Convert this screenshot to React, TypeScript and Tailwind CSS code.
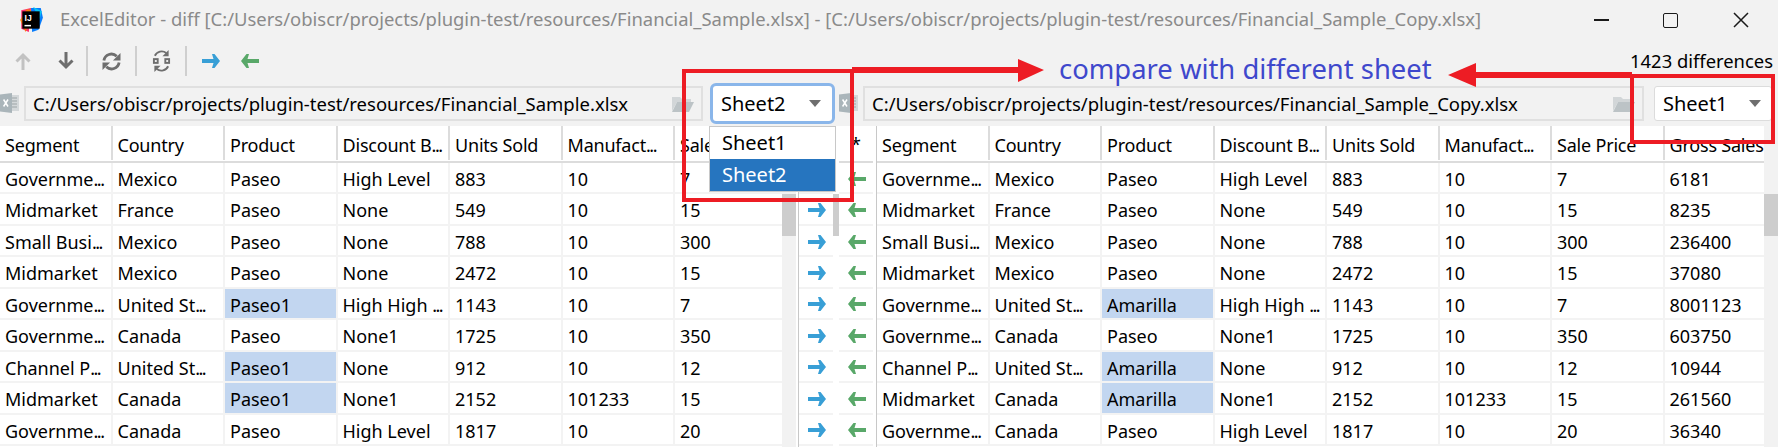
const font = { fontFamily: '"Noto Sans", "Open Sans", sans-serif' };

const headers = ["Segment", "Country", "Product", "Discount B...", "Units Sold", "Manufact...", "Sale Price", "Gross Sales"];

const rows = [
  ["Governme...", "Mexico", "Paseo", "High Level", "883", "10", "7", "6181"],
  ["Midmarket", "France", "Paseo", "None", "549", "10", "15", "8235"],
  ["Small Busi...", "Mexico", "Paseo", "None", "788", "10", "300", "236400"],
  ["Midmarket", "Mexico", "Paseo", "None", "2472", "10", "15", "37080"],
  ["Governme...", "United St...", "Paseo1", "High High ...", "1143", "10", "7", "8001123"],
  ["Governme...", "Canada", "Paseo", "None1", "1725", "10", "350", "603750"],
  ["Channel P...", "United St...", "Paseo1", "None", "912", "10", "12", "10944"],
  ["Midmarket", "Canada", "Paseo1", "None1", "2152", "101233", "15", "261560"],
  ["Governme...", "Canada", "Paseo", "High Level", "1817", "10", "20", "36340"],
];

const rightProduct = ["Paseo", "Paseo", "Paseo", "Paseo", "Amarilla", "Paseo", "Amarilla", "Amarilla", "Paseo"];

function Label({ text }: { text: string }) {
  if (!text.endsWith("...")) return <>{text}</>;
  return (
    <>
      {text.slice(0, -3)}
      <span className="tracking-[-1.5px]">...</span>
    </>
  );
}

function ExcelIcon() {
  return (
    <svg width="20" height="22" viewBox="0 0 20 22" className="shrink-0">
      <rect x="8" y="3" width="11" height="16" fill="#d4d8da" />
      <path d="M11 6h6M11 9h6M11 12h6M11 15h6" stroke="#aeb5b8" strokeWidth="1.4" />
      <path d="M0 2.5 12 1v20L0 19.5z" fill="#aab5ba" />
      <path d="m3.6 7.5 4.4 7M8 7.500l-4.400 7" stroke="#fff" strokeWidth="1.5" />
    </svg>
  );
}

function FolderIcon() {
  return (
    <svg width="24" height="20" viewBox="0 0 24 20" className="shrink-0">
      <path d="M1 3h8l2 2h9v3H6L1 17z" fill="#d2d6d8" />
      <path d="M6 8h17l-5 10H1z" fill="#bcc3c6" />
    </svg>
  );
}

function Arrow({ dir, color }: { dir: "l" | "r"; color: string }) {
  return (
    <svg width="18" height="14" viewBox="0 0 18 14">
      {dir === "r" ? (
        <path d="M0 5h11.500L10 0h2.500L18 7l-5.500 7H10l1.500-5H0z" fill={color} />
      ) : (
        <path d="M18 5H6.500L8 0H5.500L0 7l5.500 7H8L6.500 9H18z" fill={color} />
      )}
    </svg>
  );
}

function Sep() {
  return <div className="h-[30px] w-[2px] bg-[#cfcfcf]" />;
}

function ToolbarIcons() {
  return (
    <div className="flex h-[44px] items-center pb-[2px]">
      <div className="flex w-[45px] justify-center pl-[1px]">
        <svg width="16" height="18" viewBox="0 0 16 18" fill="none" stroke="#c2c2c2" strokeWidth="3">
          <path d="M8 18V3M1.500 9.500 8 3l6.500 6.500" />
        </svg>
      </div>
      <div className="flex w-[41px] justify-center">
        <svg width="16" height="18" viewBox="0 0 16 18" fill="none" stroke="#6e6e6e" strokeWidth="3">
          <path d="M8 0v15M1.500 8.500 8 15l6.500-6.500" />
        </svg>
      </div>
      <Sep />
      <div className="flex w-[47px] justify-center">
        <svg width="19" height="19" viewBox="0 0 20 20" fill="none" stroke="#6e6e6e" strokeWidth="3">
          <path d="M2 9a8 8 0 0 1 13.500-4.500" />
          <path d="M18 11a8 8 0 0 1-13.500 4.500" />
          <path d="M19.500 1v8h-8z" fill="#6e6e6e" stroke="none" />
          <path d="M.5 19v-8h8z" fill="#6e6e6e" stroke="none" />
        </svg>
      </div>
      <Sep />
      <div className="flex w-[48px] justify-center">
        <svg width="19" height="24" viewBox="0 0 20 24" fill="none" stroke="#6e6e6e" strokeWidth="2">
          <path d="M3 6.500a8 8 0 0 1 12-3" />
          <path d="M17 17.500a8 8 0 0 1-12 3" />
          <path d="M17.500.5V7H11z" fill="#6e6e6e" stroke="none" />
          <path d="M2.500 23.500V17H9z" fill="#6e6e6e" stroke="none" />
          <rect x="2" y="10" width="4" height="4" />
          <rect x="14" y="10" width="4" height="4" />
        </svg>
      </div>
      <Sep />
      <div className="flex w-[47px] justify-center">
        <Arrow dir="r" color="#389fd6" />
      </div>
      <div className="flex w-[31px] justify-center">
        <Arrow dir="l" color="#59a869" />
      </div>
    </div>
  );
}

function Table({ right }: { right?: boolean }) {
  const count = right ? 8 : 7;
  return (
    <div className="min-w-0 flex-1 overflow-hidden bg-white">
      <div className="flex h-[37px] border-b-2 border-[#dcdcdc] text-[18px] tracking-[-0.2px]">
        {headers.slice(0, count).map((h) => (
          <div key={h} className="h-[34px] w-[112.5px] shrink-0 overflow-hidden whitespace-nowrap border-r-2 border-[#dcdcdc] pl-[5px] pt-[2px] leading-[34px]">
            <Label text={h} />
          </div>
        ))}
      </div>
      {rows.map((r, i) => (
        <div key={i} className="flex h-[31.45px] border-b-2 border-[#f3f3f3]">
          {r.slice(0, count).map((c, j) => {
            const text = right && j === 2 ? rightProduct[i] : c;
            const diff = j === 2 && text !== "Paseo";
            return (
              <div
                key={j}
                className={
                  diff
                    ? "w-[112.5px] shrink-0 overflow-hidden whitespace-nowrap border-r-2 border-[#f3f3f3] bg-[#c2d6f0] pl-[5px] pt-[2px] leading-[29px]"
                    : "w-[112.5px] shrink-0 overflow-hidden whitespace-nowrap border-r-2 border-[#f3f3f3] pl-[5px] pt-[2px] leading-[29px]"
                }
              >
                <Label text={text} />
              </div>
            );
          })}
        </div>
      ))}
    </div>
  );
}

function ArrowColumn({ dir, color, star }: { dir: "l" | "r"; color: string; star?: boolean }) {
  return (
    <div className="w-[34px] shrink-0 bg-white">
      <div className="flex h-[37px] justify-center border-b-2 border-[#dcdcdc] pt-[8px] leading-[20px]">{star ? "*" : ""}</div>
      {rows.map((_, i) => (
        <div key={i} className="flex h-[31.45px] items-center justify-center border-b-2 border-[#f3f3f3] pl-[2px] pt-[2px]">
          <Arrow dir={dir} color={color} />
        </div>
      ))}
    </div>
  );
}

function Scroll({ className }: { className: string }) {
  return (
    <div className={className}>
      <div className="mt-[68px] h-[42px] w-full bg-[#cdcdcd]" />
    </div>
  );
}

function PathField({ path, className }: { path: string; className: string }) {
  return (
    <div className={className}>
      <span className="whitespace-nowrap text-[18.500px]">{path}</span>
      <FolderIcon />
    </div>
  );
}

export default function App() {
  return (
    <div style={font} className="relative h-[447px] w-[1778px] overflow-hidden bg-[#f2f2f2] text-[18px] text-black">
      <div className="flex h-[40px] items-center">
        <div className="ml-[18px] h-[26px] w-[26px] shrink-0">
          <svg width="26" height="26" viewBox="0 0 24 24">
            <path d="M3 3 12 1l-2 22-7-3z" fill="#fc2d6e" />
            <path d="M2 12 8 2l7 1-8 20z" fill="#f97a12" />
            <path d="M12 1h9l2 9-4 11-6 2z" fill="#087cfa" />
            <path d="m14 0 8 4-2 7z" fill="#07c3f2" />
            <rect x="4" y="4" width="16" height="16" fill="#000" />
            <rect x="6" y="16.500" width="6" height="1.400" fill="#fff" />
            <text x="6" y="12.500" fontSize="8" fontWeight="700" fill="#fff" fontFamily="Liberation Sans">IJ</text>
          </svg>
        </div>
        <div className="ml-[16px] whitespace-nowrap pb-[2px] text-[18.450px] text-[#8a8a8a]">
          ExcelEditor - diff [C:/Users/obiscr/projects/plugin-test/resources/Financial_Sample.xlsx] - [C:/Users/obiscr/projects/plugin-test/resources/Financial_Sample_Copy.xlsx]
        </div>
        <div className="ml-auto flex h-full items-center pr-[29px]">
          <div className="h-[1.500px] w-[15px] bg-[#1a1a1a]" />
          <div className="ml-[54px] h-[15px] w-[15px] rounded-[2px] border-[1.500px] border-[#1a1a1a]" />
          <svg className="ml-[55px]" width="16" height="16" viewBox="0 0 16 16" stroke="#1a1a1a" strokeWidth="1.500">
            <path d="m1 1 14 14M15 1 1 15" />
          </svg>
        </div>
      </div>

      <ToolbarIcons />

      <div className="flex h-[42px] items-start pt-[2px]">
        <div className="flex w-[24px] shrink-0 items-center pt-[6px]"><ExcelIcon /></div>
        <PathField
          path="C:/Users/obiscr/projects/plugin-test/resources/Financial_Sample.xlsx"
          className="flex h-[35px] w-[679px] shrink-0 items-center justify-between border-2 border-[#e0e0e0] pl-[7px] pr-[6px]"
        />
        <div className="ml-[10px] flex h-[35px] w-[119px] shrink-0 items-center justify-between rounded-[3px] bg-white pl-[8px] pr-[11px] text-[20px] outline-3 outline-[#8ab6ea]">
          <span>Sheet2</span>
          <span className="h-0 w-0 border-x-[6.500px] border-t-[7px] border-x-transparent border-t-[#6e6e6e]" />
        </div>
        <div className="ml-[7px] flex w-[22px] shrink-0 items-center pt-[6px]"><ExcelIcon /></div>
        <PathField
          path="C:/Users/obiscr/projects/plugin-test/resources/Financial_Sample_Copy.xlsx"
          className="ml-[2px] flex h-[35px] w-[781px] shrink-0 items-center justify-between border-2 border-[#e0e0e0] pl-[7px] pr-[6px]"
        />
        <div className="ml-[10px] flex h-[35px] w-[118px] shrink-0 items-center justify-between rounded-[3px] border border-[#dcdcdc] bg-white pl-[8px] pr-[10px] text-[20px]">
          <span>Sheet1</span>
          <span className="h-0 w-0 border-x-[6.500px] border-t-[7px] border-x-transparent border-t-[#6e6e6e]" />
        </div>
      </div>

      <div className="flex h-[321px] bg-white">
        <Table />
        <Scroll className="w-[14px] shrink-0 bg-[#f2f2f2]" />
        <div className="w-[2px] shrink-0 bg-white" />
        <div className="w-[1px] shrink-0 bg-[#c8c8c8]" />
        <ArrowColumn dir="r" color="#389fd6" />
        <Scroll className="w-[6px] shrink-0 bg-white" />
        <ArrowColumn dir="l" color="#59a869" star />
        <div className="w-[3px] shrink-0 bg-white" />
        <div className="w-[1px] shrink-0 bg-[#c8c8c8]" />
        <div className="w-[887px] shrink-0"><Table right /></div>
        <Scroll className="w-[14px] shrink-0 bg-[#f2f2f2]" />
      </div>

      {/* dropdown popup */}
      <div className="absolute left-[709px] top-[126px] h-[66px] w-[127px] border border-[#c8c8c8] bg-white text-[20px]">
        <div className="h-[32px] pl-[12px] leading-[32px]">Sheet1</div>
        <div className="h-[32px] bg-[#2675bf] pl-[12px] leading-[32px] text-white">Sheet2</div>
      </div>

      {/* annotations */}
      <div className="absolute left-[682px] top-[69px] h-[133px] w-[172px] border-4 border-[#ed1c24]" />
      <div className="absolute left-[1630px] top-[74px] h-[70px] w-[145px] border-4 border-[#ed1c24]" />
      <svg className="absolute left-[850px] top-[56px]" width="196" height="28" viewBox="0 0 196 28">
        <path d="M2 11h166V3l26 11-26 12v-9H2z" fill="#ed1c24" />
      </svg>
      <svg className="absolute left-[1446px] top-[61px]" width="188" height="28" viewBox="0 0 188 28">
        <path d="M186 11H30V2L2 14l28 12v-9h156z" fill="#ed1c24" />
      </svg>
      <div className="absolute left-[1059px] top-[49px] whitespace-nowrap text-[27.400px] leading-[40px] text-[#3f48cc]">compare with different sheet</div>
      <div className="absolute right-[5px] top-[49px] whitespace-nowrap text-[18.400px] leading-[24px]">1423 differences</div>
    </div>
  );
}
